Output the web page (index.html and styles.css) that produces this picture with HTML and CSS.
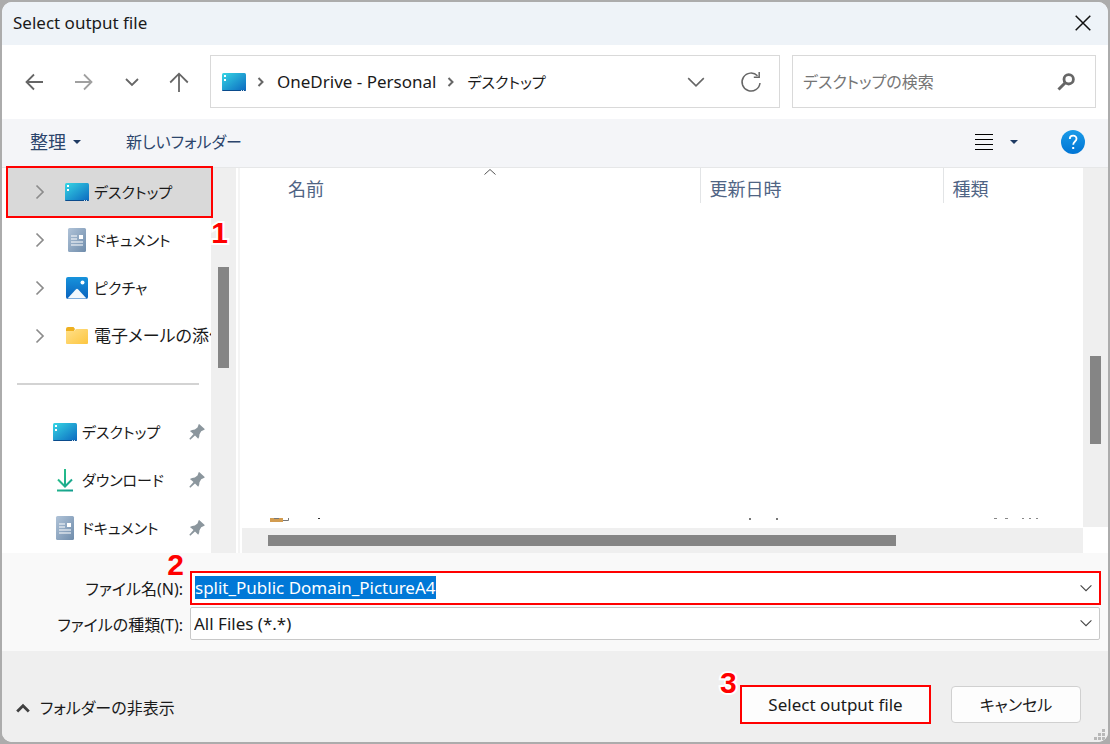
FILE: index.html
```html
<!DOCTYPE html>
<html lang="ja">
<head>
<meta charset="utf-8">
<title>Select output file</title>
<link rel="stylesheet" href="styles.css">
</head>
<body>
<svg class="defs" aria-hidden="true">
  <defs>
    <linearGradient id="desk" x1="0" y1="0" x2="1" y2="1"><stop offset="0" stop-color="#36d6e4"/><stop offset="1" stop-color="#0b68c0"/></linearGradient>
    <linearGradient id="doc" x1="0" y1="0" x2="1" y2="1"><stop offset="0" stop-color="#b0c3d8"/><stop offset="1" stop-color="#6f8cab"/></linearGradient>
    <linearGradient id="pic" x1="0" y1="0" x2="0" y2="1"><stop offset="0" stop-color="#1793dc"/><stop offset="1" stop-color="#0a62bd"/></linearGradient>
    <linearGradient id="fold" x1="0" y1="0" x2="1" y2="1"><stop offset="0" stop-color="#ffe08a"/><stop offset="1" stop-color="#fdc640"/></linearGradient>
    <linearGradient id="down" x1="0" y1="0" x2="1" y2="1"><stop offset="0" stop-color="#2fc98a"/><stop offset="1" stop-color="#119c8e"/></linearGradient>
    <linearGradient id="help" x1="0" y1="0" x2="0" y2="1"><stop offset="0" stop-color="#1a9be8"/><stop offset="1" stop-color="#0074d4"/></linearGradient>
    <symbol id="i-desktop" viewBox="0 0 24 24"><rect y="3" width="24" height="18" rx="1.5" fill="url(#desk)"/><path d="M0 20h24a1.300 1.300 0 0 1-1.300 1H1.300A1.300 1.300 0 0 1 0 20z" fill="#0a4b8c"/><path d="M2 5h2v2H2zM2 9h2v2H2z" fill="#fff"/><path d="M19 20.500h1M21 20.500h1" stroke="#cfe6f7"/></symbol>
    <symbol id="i-document" viewBox="0 0 24 24"><rect x="3" width="18" height="24" rx="1.500" fill="url(#doc)"/><path d="M6 8h6M6 11h6M6 14h12M6 17h12" stroke="#fff" stroke-width="1.200"/><rect x="14" y="7" width="4" height="4" fill="#fff"/></symbol>
    <symbol id="i-picture" viewBox="0 0 24 24"><rect x="1" y="1" width="22" height="22" rx="2" fill="url(#pic)"/><path d="M2.500 22.500L11 13.300q1-1 2 0l8.500 9.200z" fill="#f2f8fd"/><circle cx="17.500" cy="6.500" r="2" fill="#fff"/></symbol>
    <symbol id="i-folder" viewBox="0 0 24 24"><path d="M1 5q0-2 2-2h5.500l1.500 2-1 2H1z" fill="#eeb020"/><path d="M1 7h8l2-2h11q1 0 1 1v13q0 1-1 1H2q-1 0-1-1z" fill="url(#fold)"/></symbol>
    <symbol id="i-download" viewBox="0 0 24 24"><path d="M12 1v17M5 11.500l7 7 7-7M4 22.500h16" fill="none" stroke="url(#down)" stroke-width="2"/></symbol>
    <symbol id="i-pin" viewBox="0 0 16 16"><path d="M9.700.300q.500-.400 1 .1l4.700 4.400q.500.500 0 1l-3.200 1.500-1.700 3q0 2.500-1.300 4.500L6 11.500 1.300 15.700.300 14.700 4.500 10 .900 7q2-1.600 4.900-1.600l2.700-1.900z" fill="#8b969d"/></symbol>
    <symbol id="i-right" viewBox="0 0 16 16"><path d="M4.500 1.500L11 8l-6.500 6.500" fill="none" stroke="#8c8c8c" stroke-width="1.700"/></symbol>
    <symbol id="i-crumb" viewBox="0 0 12 12"><path d="M3.500 2l4 4-4 4" fill="none" stroke="#666" stroke-width="2"/></symbol>
    <symbol id="i-down" viewBox="0 0 20 20"><path d="M4 7l6 6 6-6" fill="none" stroke="currentColor" stroke-width="1.200"/></symbol>
  </defs>
</svg>

<main class="dialog">
  <header class="titlebar">
    <h1 class="title">Select output file</h1>
    <button class="plain close" aria-label="閉じる"><svg width="16" height="16" viewBox="0 0 16 16"><path d="M.700.700l14.600 14.600M15.300.700L.700 15.300" stroke="#111" stroke-width="1.500"/></svg></button>
  </header>

  <nav class="navbar">
    <div class="history">
      <button class="plain" aria-label="戻る"><svg width="20" height="20" viewBox="0 0 20 20"><path d="M19 10H2.500M10 2.500L2.500 10l7.500 7.500" fill="none" stroke="#666" stroke-width="1.800"/></svg></button>
      <button class="plain" aria-label="進む"><svg width="20" height="20" viewBox="0 0 20 20"><path d="M1 10h16.500M10 2.500l7.500 7.500-7.500 7.500" fill="none" stroke="#a0a0a0" stroke-width="1.800"/></svg></button>
      <button class="plain" aria-label="最近表示した場所"><svg width="14" height="20" viewBox="0 0 14 20"><path d="M1 7l6 6 6-6" fill="none" stroke="#666" stroke-width="1.800"/></svg></button>
      <button class="plain" aria-label="上へ"><svg width="20" height="20" viewBox="0 0 20 20"><path d="M10 20V2M1.200 10.500L10 1.700l8.800 8.800" fill="none" stroke="#666" stroke-width="1.800"/></svg></button>
    </div>
    <div class="address">
      <svg class="icon"><use href="#i-desktop"/></svg>
      <svg class="crumb"><use href="#i-crumb"/></svg>
      <a class="place" href="#">OneDrive - Personal</a>
      <svg class="crumb"><use href="#i-crumb"/></svg>
      <a class="place kana" href="#">デスクトップ</a>
      <button class="plain open" aria-label="履歴"><svg width="26" height="26"><use href="#i-down"/></svg></button>
      <button class="plain" aria-label="更新"><svg width="22" height="22" viewBox="0 0 22 22"><path d="M20 12a9 9 0 1 1-2.500-7.200M13.800 6.200h5.400V1" fill="none" stroke="#666" stroke-width="1.500"/></svg></button>
    </div>
    <div class="search">
      <input class="search-box" type="search" aria-label="検索" placeholder="デスクトップの検索">
      <svg width="18" height="18" viewBox="0 0 18 18"><circle cx="11.700" cy="6.300" r="4.700" fill="none" stroke="#666" stroke-width="2.800"/><path d="M8.500 9.500l-7 7" stroke="#666" stroke-width="3"/></svg>
    </div>
  </nav>

  <div class="toolbar">
    <button class="plain tool">整理 <svg class="caret" viewBox="0 0 8 4"><path d="M0 0h8L4 4z"/></svg></button>
    <button class="plain tool mixed">新しいフォルダー</button>
    <button class="plain tool view" aria-label="表示方法の変更"><svg width="18" height="18" viewBox="0 0 18 18"><path d="M0 1.500h18M0 6.500h18M0 11.500h18M0 16.500h18" stroke="#000"/></svg><svg class="caret" viewBox="0 0 8 4"><path d="M0 0h8L4 4z"/></svg></button>
    <button class="plain" aria-label="ヘルプ"><svg width="24" height="24" viewBox="0 0 24 24"><circle cx="12" cy="12" r="12" fill="url(#help)"/><path d="M8.800 8.900c0-4.300 6.700-4.300 6.700-.2 0 2.800-3.300 2.800-3.300 6" fill="none" stroke="#fff" stroke-width="1.800"/><path d="M11.200 17h2v2h-2z" fill="#fff"/></svg></button>
  </div>

  <section class="browser">
    <div class="sidebar">
      <ul class="tree">
        <li class="node selected"><svg class="expand"><use href="#i-right"/></svg><svg class="icon"><use href="#i-desktop"/></svg><span class="name kana">デスクトップ</span><b class="step step-one">1</b></li>
        <li class="node"><svg class="expand"><use href="#i-right"/></svg><svg class="icon"><use href="#i-document"/></svg><span class="name kana">ドキュメント</span></li>
        <li class="node"><svg class="expand"><use href="#i-right"/></svg><svg class="icon"><use href="#i-picture"/></svg><span class="name kana">ピクチャ</span></li>
        <li class="node"><svg class="expand"><use href="#i-right"/></svg><svg class="icon"><use href="#i-folder"/></svg><span class="name">電子メールの添付</span></li>
      </ul>
      <hr class="divider">
      <ul class="tree">
        <li class="node pinned"><svg class="icon"><use href="#i-desktop"/></svg><span class="name kana">デスクトップ</span><svg class="pin"><use href="#i-pin"/></svg></li>
        <li class="node pinned"><svg class="icon"><use href="#i-download"/></svg><span class="name kana">ダウンロード</span><svg class="pin"><use href="#i-pin"/></svg></li>
        <li class="node pinned"><svg class="icon"><use href="#i-document"/></svg><span class="name kana">ドキュメント</span><svg class="pin"><use href="#i-pin"/></svg></li>
      </ul>
    </div>
    <div class="track side-track"><div class="thumb"></div></div>
    <div class="splitter"></div>
    <div class="files">
      <table class="list">
        <colgroup><col class="col-name"><col class="col-date"><col></colgroup>
        <thead><tr>
          <th class="first">名前<svg class="sort" viewBox="0 0 12 6"><path d="M.500 5.500L6 .500l5.500 5" fill="none" stroke="#555"/></svg></th>
          <th>更新日時</th>
          <th>種類</th>
        </tr></thead>
        <tbody><tr>
          <td class="first"><svg width="52" height="4" viewBox="0 0 52 4"><path d="M0 0h13v4H0z" fill="#d29c50"/><path d="M4 .500h5M13 2.500h5.500V0" fill="none" stroke="#777"/><path d="M48 .500h2" stroke="#333"/></svg></td>
          <td><svg width="80" height="4" viewBox="0 0 80 4"><path d="M50 0v2M77 0v2" stroke="#777" stroke-width="2"/></svg></td>
          <td><svg width="110" height="4" viewBox="0 0 110 4"><path d="M51 .500h3M62 .500h3M79 .500h2M86 .500h2M93 .500h2" stroke="#888"/></svg></td>
        </tr></tbody>
      </table>
      <div class="track row-track"><div class="thumb"></div></div>
    </div>
    <div class="track file-track"><div class="thumb"></div></div>
  </section>

  <form class="fields">
    <label class="label" for="filename">ファイル名(N):<b class="step step-two">2</b></label>
    <div class="combo marked">
      <input class="value" id="filename" type="text" value="split_Public Domain_PictureA4">
      <svg class="arrow"><use href="#i-down"/></svg>
    </div>
    <label class="label" for="filetype">ファイルの種類(T):</label>
    <div class="combo">
      <select class="value" id="filetype"><option>All Files (*.*)</option></select>
      <svg class="arrow"><use href="#i-down"/></svg>
    </div>
  </form>

  <footer class="footer">
    <button class="plain hide"><svg width="14" height="10" viewBox="0 0 14 10"><path d="M1.200 8.500L7 2.700l5.800 5.800" fill="none" stroke="#404040" stroke-width="2.800"/></svg>フォルダーの非表示</button>
    <button class="action primary">Select output file<b class="step step-three">3</b></button>
    <button class="action cancel">キャンセル</button>
    <svg class="grip" viewBox="0 0 12 12"><path d="M8 0h3v3H8zM4 4h3v3H4zM8 4h3v3H8zM0 8h3v3H0zM4 8h3v3H4zM8 8h3v3H8z" fill="#b8b8b8"/></svg>
  </footer>
</main>
<script src="main.js"></script>
</body>
</html>
```
FILE: styles.css
```css
* { box-sizing: border-box; }

body {
  margin: 0;
  min-height: 100vh;
  display: flex;
  padding: 2px;
  background: #acacac;
  color: #1a1a1a;
  font: 17px/24px "Noto Sans", "Noto Sans CJK JP", sans-serif;
  font-feature-settings: "palt";
}

.defs { position: absolute; width: 0; height: 0; }

button, input, select { font: inherit; font-feature-settings: inherit; color: inherit; }
.plain { display: flex; align-items: center; padding: 0; border: 0; background: none; }
svg { flex: none; display: block; }
.icon { width: 24px; height: 24px; }

.dialog {
  flex: 1;
  min-width: 0;
  display: flex;
  flex-direction: column;
  overflow: hidden;
  border-radius: 10px;
  background: #fff;
}

.titlebar {
  display: flex;
  align-items: center;
  justify-content: space-between;
  height: 43px;
  padding: 0 17px 2px 11px;
  background: #eef3f8;
}
.title { margin: 0; font-size: 17px; font-weight: 400; }

.navbar {
  display: grid;
  grid-template-columns: 196px 15fr 8fr;
  column-gap: 12px;
  padding: 10px 12px 11px 0;
}
.history { display: flex; align-items: center; justify-content: space-between; padding: 0 9px 0 22px; }
.address, .search {
  display: flex;
  align-items: center;
  height: 53px;
  border: 1px solid #d9d9d9;
}
.address { padding: 0 17px 0 11px; }
.crumb { width: 12px; height: 12px; margin: 0 10px 0 9px; }
.place { color: inherit; text-decoration: none; white-space: nowrap; }
.open { margin-left: auto; margin-right: 31px; color: #666; }
.search { padding: 0 20px 0 10px; }
.search-box { flex: 1; min-width: 0; padding: 0; border: 0; outline: 0; background: none; font-size: 16px; }
.search-box::placeholder { color: #757575; }

.toolbar {
  display: flex;
  align-items: center;
  height: 49px;
  padding: 0 23px 2px 28px;
  border-bottom: 1px solid #e6e7e8;
  background: #f4f5f8;
}
.tool { gap: 7px; margin-right: 45px; color: #2c456c; font-size: 18px; }
.caret { width: 8px; height: 4px; fill: #1f3a63; }
.view { gap: 17px; margin-left: auto; margin-right: 43px; }

.browser { flex: 1; display: flex; min-height: 385px; }
.sidebar { width: 209px; }
.tree { margin: 0; padding: 0; list-style: none; }
.node { position: relative; display: flex; align-items: center; height: 48px; padding-left: 30px; }
.expand { width: 16px; height: 16px; margin-right: 17px; }
.name { flex: 1; min-width: 0; margin-left: 5px; overflow: hidden; white-space: nowrap; }
.kana { font-size: 15px; }
.mixed { font-size: 16px; }
.pinned { padding: 0 6px 0 51px; }
.pin { width: 16px; height: 16px; }
.selected::before {
  content: "";
  position: absolute;
  inset: -2px -2px -2px 4px;
  border: 2px solid #f00;
  background: #d9d9d9;
}
.selected > * { position: relative; }
.divider { height: 2px; margin: 23px 12px 23px 15px; border: 0; background: #d3d3d3; }

.track { display: flex; background: #efefef; }
.thumb { background: #858585; }
.side-track { width: 25px; padding: 99px 7px 185px; }
.side-track .thumb, .file-track .thumb { flex: 1; }
.splitter { width: 6px; border: solid #fff; border-width: 0 2px; background: #f4f4f4; }
.files { flex: 1; min-width: 0; display: flex; flex-direction: column; }
.row-track { height: 25px; padding: 7px 0 7px 26px; }
.row-track .thumb { width: 77%; }
.file-track { width: 25px; margin-bottom: 26px; padding: 188px 7px 83px; }

.list { flex: 1; width: 100%; table-layout: fixed; border-collapse: collapse; }
.col-name { width: 458px; }
.col-date { width: 243px; }
.list th {
  position: relative;
  height: 35px;
  padding: 6px 0 0 9px;
  border-left: 1px solid #e2e4e6;
  color: #4f6484;
  font-size: 18px;
  font-weight: 400;
  text-align: left;
}
.list td { height: 325px; padding: 0 0 6px; vertical-align: bottom; }
.list .first { border-left: 0; padding-left: 46px; }
.list td.first { padding-left: 28px; }
.sort { position: absolute; top: 1px; left: 242px; width: 12px; height: 6px; }

.fields {
  display: grid;
  grid-template-columns: 181px 1fr;
  gap: 2px 7px;
  align-items: center;
  padding: 18px 8px 11px 0;
  background: #f9f9f9;
}
.label { position: relative; padding-top: 2px; text-align: right; font-size: 16px; }
.combo { position: relative; display: flex; border: 1px solid #c8c8c8; border-radius: 2px; background: #fff; }
.combo.marked { border: 2px solid #f00; border-radius: 0; margin-right: -1px; }
.value {
  flex: 1;
  min-width: 0;
  height: 31px;
  padding: 1px 24px 0 3px;
  border: 0;
  outline: 0;
  background: none;
  appearance: none;
}
.marked .value { height: 30px; padding: 0 24px 2px 3px; }
.value::selection { background: #0078d7; color: #fff; }
.arrow { position: absolute; right: 4px; top: 6px; width: 18px; height: 18px; color: #444; pointer-events: none; }

.footer {
  position: relative;
  display: flex;
  align-items: center;
  height: 91px;
  padding: 16px 27px 0 14px;
  background: #efefef;
}
.hide { gap: 10px; padding-top: 6px; font-size: 16px; }
.action { position: relative; height: 37px; padding: 0; border: 1px solid #d0d0d0; border-radius: 4px; background: #fdfdfd; }
.primary { width: 191px; height: 39px; margin-left: auto; margin-right: 20px; border: 2px solid #f00; border-radius: 0; }
.cancel { width: 130px; font-size: 16px; }
.grip { position: absolute; right: 2px; bottom: 1px; width: 12px; height: 12px; }

.step {
  position: absolute;
  color: #f00;
  font: bold 30px/24px "Liberation Sans", Arial, sans-serif;
  paint-order: stroke;
  -webkit-text-stroke: 4px #fff;
}
.selected > .step-one { position: absolute; top: 53px; right: -17px; z-index: 1; }
.step-two { right: -1px; bottom: 24px; -webkit-text-stroke-color: #f9f9f9; }
.step-three { left: -22px; top: -16px; }
```
FILE: main.js
```js
const filename = document.getElementById("filename");
filename.focus();
filename.select();
```
